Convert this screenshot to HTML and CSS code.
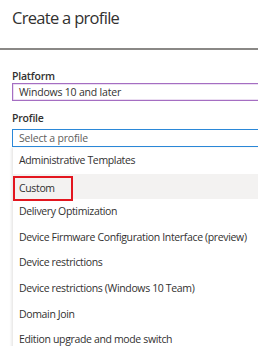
FILE: index.html
```html
<!DOCTYPE html>
<html lang="en">
  <head>
    <meta charset="UTF-8" />
    <title>Create a profile</title>
    <link rel="stylesheet" href="styles.css">
  </head>
  <body>
    <h1 class="title">Create a profile</h1>
    <div class="form">
      <label class="label">Platform</label>
      <div class="field platform">Windows 10 and later</div>
      <label class="label">Profile</label>
      <div class="field profile">Select a profile</div>
      <ul class="dropdown">
        <li>Administrative Templates</li>
        <li class="hover"><span class="mark">Custom</span></li>
        <li>Delivery Optimization</li>
        <li>Device Firmware Configuration Interface (preview)</li>
        <li>Device restrictions</li>
        <li>Device restrictions (Windows 10 Team)</li>
        <li>Domain Join</li>
        <li>Edition upgrade and mode switch</li>
      </ul>
    </div>
  </body>
</html>
```

FILE: styles.css
```css
* {
  box-sizing: border-box;
  margin: 0;
  padding: 0;
}
body {
  font-family: "Open Sans", "Noto Sans", sans-serif;
  color: #323130;
  background: white;
  overflow: hidden;
  width: 258px;
  height: 346px;
}
.title {
  font-size: 16.5px;
  font-weight: 400;
  letter-spacing: -0.7px;
  line-height: 24px;
  padding: 6px 0 0 12px;
  height: 50px;
  border-bottom: 2px solid #8a8886;
}
.form {
  padding: 19px 0 0 12px;
  margin-right: -40px;
}
.label {
  display: block;
  font-size: 10.5px;
  font-weight: 600;
  letter-spacing: -0.2px;
  line-height: 14px;
}
.field {
  font-size: 10.5px;
  letter-spacing: -0.2px;
  line-height: 14px;
  height: 18px;
  padding: 1px 6px;
  border: 1px solid #b07fcc;
  margin-bottom: 10px;
}
.field.platform {
  border-color: #a56ec2;
  box-shadow: inset 0 0 0 0.5px #d8bde6;
}
.field.profile {
  border-color: #2b88d8;
  color: #605e5c;
  margin-top: 4px;
  margin-bottom: 0;
}
.dropdown {
  list-style: none;
  margin-top: 1px;
  box-shadow: -1px 0 2px rgba(0, 0, 0, 0.08);
  border-left: 1px solid #ecebea;
}
.dropdown li {
  font-size: 10.5px;
  letter-spacing: -0.35px;
  height: 25.6px;
  line-height: 25.6px;
  padding-left: 6px;
  white-space: nowrap;
}
.dropdown li.hover {
  background: #f3f2f1;
}
.mark {
  display: inline-block;
  vertical-align: top;
  margin: 2px 0 0 -6px;
  padding-left: 4px;
  width: 60px;
  height: 25px;
  line-height: 21px;
  border: 2px solid #e3161f;
}
```
